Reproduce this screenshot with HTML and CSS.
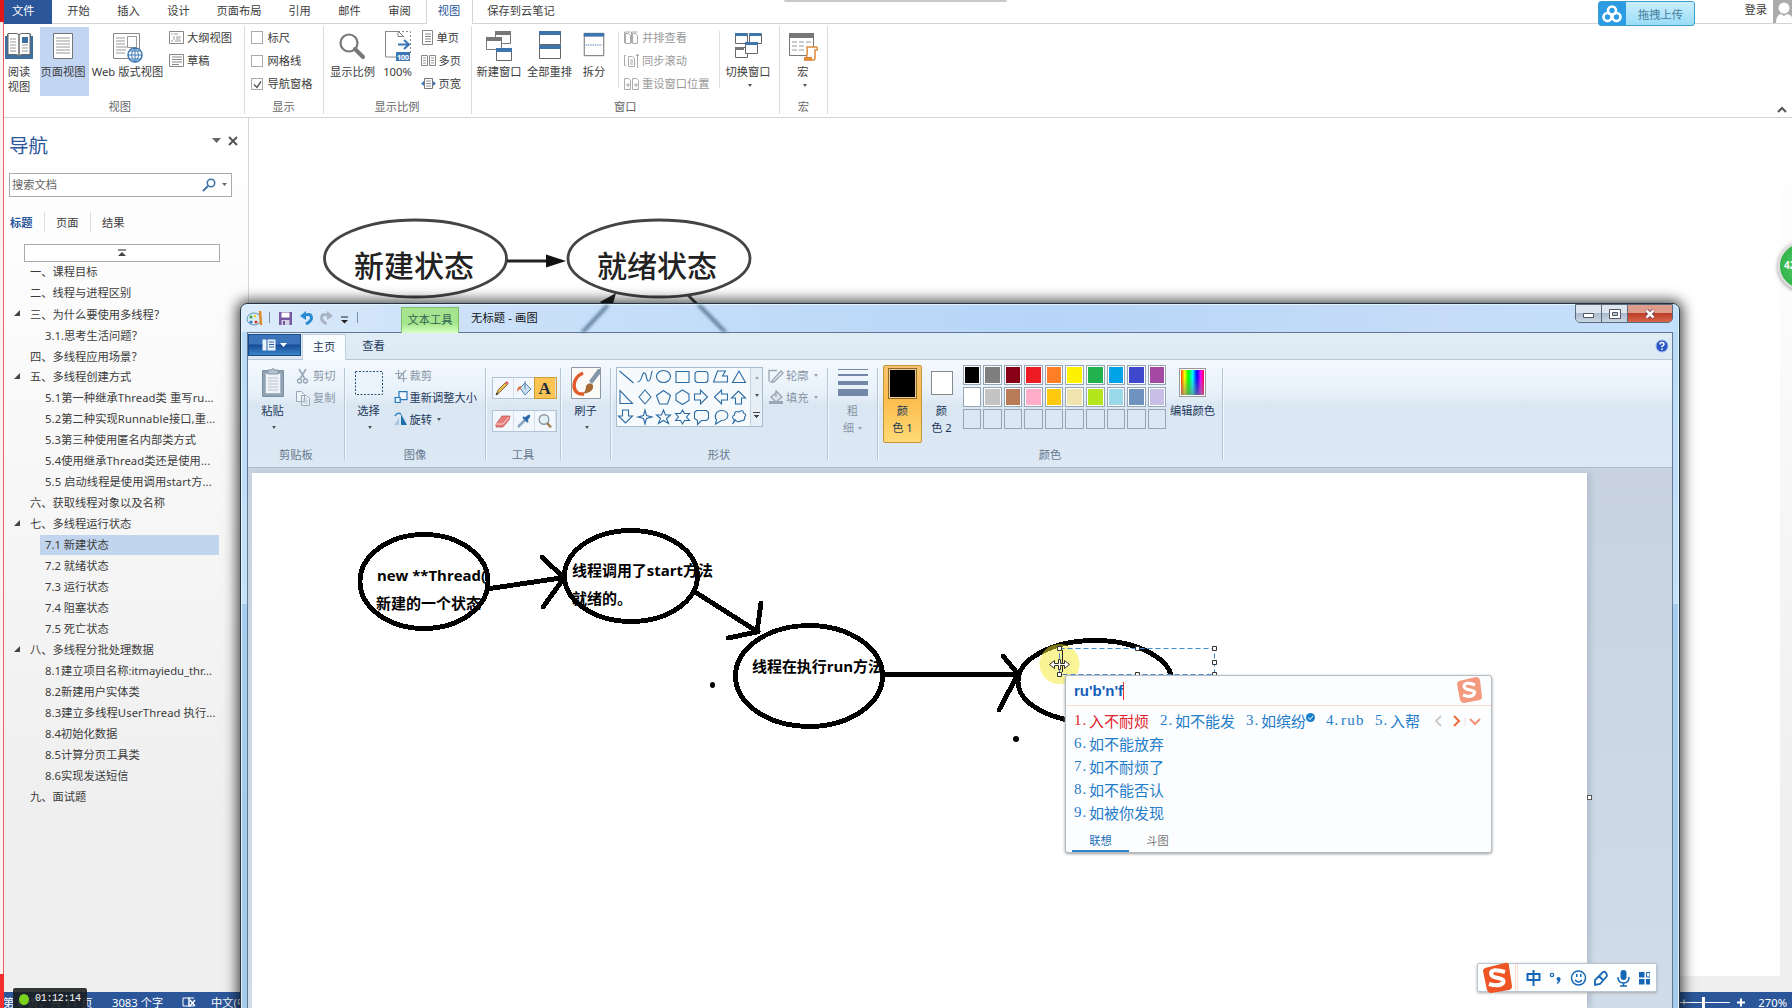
FILE: index.html
```html
<!DOCTYPE html>
<html lang="zh-CN">
<head>
<meta charset="utf-8">
<title>无标题 - 画图</title>
<link rel="stylesheet" href="styles.css">
</head>
<body>
<div class="screen">

<div class="word">
  <div class="word-tabs">
    <div class="file-tab">文件</div>
    <nav class="tab-list">
      <span class="wtab">开始</span><span class="wtab">插入</span><span class="wtab">设计</span><span class="wtab wide">页面布局</span><span class="wtab">引用</span><span class="wtab">邮件</span><span class="wtab">审阅</span><span class="wtab active">视图</span><span class="wtab note">保存到云笔记</span>
    </nav>
    <div class="account"><span>登录</span>
      <svg class="avatar" width="19" height="23" viewBox="0 0 19 23"><rect width="19" height="23" fill="#ababab"/><circle cx="11" cy="8" r="5.500" fill="#fff"/><path d="M3 23q0-8 5-9l3 2 3-2q5 1 5 4v5z" fill="#fff"/></svg>
    </div>
  </div>

  <div class="ribbon">
    <section class="group g-view">
      <div class="group-body">
        <div class="big read"><div class="ico"><svg width="30" height="28" viewBox="0 0 30 28"><path d="M1 4h2v-2h11l1 1 1-1h11v2h2v23H1z" fill="#3f6f9f"/><path d="M4 1.500h8q3 0 3 2v21q-1-2-3-2H4zM26 1.500h-8q-3 0-3 2v21q1-2 3-2h8z" fill="#fff" stroke="#666"/><path d="M6 7h6M6 10h6M6 13h6M6 16h6M6 19h6M18 16h6M18 19h6M18 13h6" stroke="#999"/><path d="M18 5h6v6h-6z" fill="#3f6f9f"/></svg></div><span>阅读</span><span>视图</span></div>
        <div class="big page on"><div class="ico"><svg width="22" height="28" viewBox="0 0 22 28"><path d="M1.500 1.500h19v25h-19z" fill="#fff" stroke="#777"/><path d="M4 6h14M4 9h14M4 12h14M4 15h14M4 18h14M4 21h14" stroke="#999"/></svg></div><span>页面视图</span></div>
        <div class="big web"><div class="ico"><svg width="32" height="32" viewBox="0 0 32 32"><path d="M1.500 1.500h26v25h-26z" fill="#fff" stroke="#888"/><path d="M4 6h9M4 9h9M4 12h9M4 15h11M4 18h10M4 21h9" stroke="#999"/><path d="M15.500 4.500h9v11h-9z" fill="#fff" stroke="#999"/><circle cx="23" cy="23" r="7" fill="#fff" stroke="#3b78b5" stroke-width="1.500"/><path d="M16 23h14M23 16v14M18 19h10M18 27h10M23 16q-7 7 0 14M23 16q7 7 0 14" fill="none" stroke="#3b78b5"/></svg></div><span>Web 版式视图</span></div>
        <div class="rows r1">
          <div class="row"><svg width="15" height="13" viewBox="0 0 15 13"><path d="M.5.500h14v12H.5z" fill="#fff" stroke="#888"/><path d="M2 3h2M5 3h4M4 6h2M7 6h5M4 8h2M7 8h4M2 10h2M6 10h6" stroke="#999"/></svg>大纲视图</div>
          <div class="row"><svg width="15" height="13" viewBox="0 0 15 13"><path d="M.5.500h14v12H.5z" fill="#fff" stroke="#888"/><path d="M3 3h10M3 5.500h10M3 8h10M3 10.500h7" stroke="#888"/></svg>草稿</div>
        </div>
      </div>
      <div class="group-label">视图</div>
    </section>
    <section class="group g-show">
      <div class="group-body"><div class="rows r2">
        <div class="row"><i class="check"></i>标尺</div>
        <div class="row"><i class="check"></i>网格线</div>
        <div class="row"><i class="check"><svg width="11" height="11" viewBox="0 0 11 11"><path d="M2 5.500l3 3 4-6" fill="none" stroke="#555" stroke-width="1.400"/></svg></i>导航窗格</div>
      </div></div>
      <div class="group-label">显示</div>
    </section>
    <section class="group g-zoom">
      <div class="group-body">
        <div class="big z1"><div class="ico"><svg width="28" height="30" viewBox="0 0 28 30"><circle cx="10" cy="11" r="8.500" fill="none" stroke="#777" stroke-width="2.200"/><path d="M16 17l8 8" stroke="#777" stroke-width="4" stroke-linecap="round"/></svg></div><span>显示比例</span></div>
        <div class="big z2"><div class="ico"><svg width="28" height="32" viewBox="0 0 28 32"><path d="M1.500 1v26H12M1 1.500h13v5h5" fill="none" stroke="#888"/><path d="M14 1.500h12.500V24" fill="none" stroke="#888" stroke-dasharray="2 2"/><path d="M14 1l6 6" stroke="#777"/><path d="M14 14.500h10M20 10l5 4.500-5 4.500" fill="none" stroke="#3b78b5" stroke-width="2"/><path d="M12 22h14v9H12z" fill="#3b78b5"/><text x="13" y="29.500" font-size="7.500" font-weight="700" fill="#fff" textLength="12">100</text></svg></div><span>100%</span></div>
        <div class="rows r3">
          <div class="row"><svg width="13" height="16" viewBox="0 0 13 16"><path d="M1.500.500h10v14h-10z" fill="#fff" stroke="#888"/><path d="M4 4h6M4 6.500h6M4 9h6M4 11.500h6" stroke="#888"/></svg>单页</div>
          <div class="row"><svg width="15" height="14" viewBox="0 0 15 14"><path d="M.5 1.500h6v10h-6zM8.500 1.500h6v10h-6z" fill="#fff" stroke="#888"/><path d="M2 4h3M2 6.500h3M2 9h3M10 4h3M10 6.500h3M10 9h3" stroke="#999"/></svg>多页</div>
          <div class="row"><svg width="15" height="14" viewBox="0 0 15 14"><path d="M3.500 1.500h8v10h-8z" fill="#fff" stroke="#777"/><path d="M5 4h5M5 6.500h5M5 9h5" stroke="#888"/><path d="M3 4v5L0 6.500zM12 4v5l3-2.500z" fill="#3b78b5"/></svg>页宽</div>
        </div>
      </div>
      <div class="group-label">显示比例</div>
    </section>
    <section class="group g-window">
      <div class="group-body">
        <div class="big n1"><div class="ico"><svg width="28" height="32" viewBox="0 0 28 32"><g fill="#fff" stroke="#777"><path d="M10.500 1.500h15v12h-15z"/><path d="M1.500 7.500h15v12h-15z"/><path d="M11.500 18.500h15v12h-15z" stroke="#666"/></g><path d="M10 1h16v4H10zM1 7h16v4H1z" fill="#777"/><path d="M11 18h16v4H11z" fill="#3f75ad"/></svg></div><span>新建窗口</span></div>
        <div class="big n2"><div class="ico"><svg width="24" height="32" viewBox="0 0 24 32"><path d="M1.500 1.500h21v13h-21zM1.500 15.500h21v13h-21z" fill="#fff" stroke="#666"/><path d="M1 1h22v4H1zM1 15h22v4H1z" fill="#3f75ad"/></svg></div><span>全部重排</span></div>
        <div class="big n3"><div class="ico"><svg width="24" height="26" viewBox="0 0 24 28"><path d="M1.500 1.500h21v24h-21z" fill="#fff" stroke="#666"/><path d="M1 1h22v4H1z" fill="#3f75ad"/><path d="M3 14h18" stroke="#3f75ad" stroke-dasharray="1.500 1"/></svg></div><span>拆分</span></div>
        <i class="vline"></i>
        <div class="rows r4">
          <div class="row"><svg width="15" height="14" viewBox="0 0 15 14"><path d="M1.500 2.500h3l2 2v8h-5zM8.500 2.500h3l2 2v8h-5zM.5 12V1h6M7.500 12V1h6" fill="none" stroke="#aaa"/></svg>并排查看</div>
          <div class="row"><svg width="15" height="14" viewBox="0 0 15 14"><path d="M2 1.500H.5v10H2M4.500 2.500h4l2 2v8h-6zM6 6h3M6 8h3M6 10h3M13.500 0v14M12 2l1.500-2L15 2" fill="none" stroke="#aaa"/></svg>同步滚动</div>
          <div class="row"><svg width="15" height="14" viewBox="0 0 15 14"><path d="M.5 1.500h4l2 2v9h-6zM8.500 1.500h4l2 2v9h-6zM2 8h4M10 8h4M4 6v4M12 6v4" fill="none" stroke="#aaa"/></svg>重设窗口位置</div>
        </div>
        <i class="vline"></i>
        <div class="big n4"><div class="ico"><svg width="28" height="28" viewBox="0 0 28 28"><g fill="#fff" stroke="#666"><path d="M1.500 1.500h12v10h-12zM15.500 1.500h12v10h-12zM1.500 15.500h12v10h-12z"/><path d="M11.500 10.500h12v11h-12z"/></g><path d="M1 1h12v3H1zM15 1h12v3H15zM11 10h13v3H11z" fill="#3f75ad"/><path d="M1 15h9v3H1z" fill="#777"/></svg></div><span>切换窗口</span><b class="arr"></b></div>
      </div>
      <div class="group-label">窗口</div>
    </section>
    <section class="group g-macro">
      <div class="group-body">
        <div class="big m1"><div class="ico"><svg width="30" height="30" viewBox="0 0 30 30"><path d="M1.500 1.500h24v22h-24z" fill="#fff" stroke="#777"/><path d="M1 1h25v5H1z" fill="#777"/><path d="M4 10h5M11 10h5M18 10h5M4 14h5M11 14h5M4 18h5M11 18h5" stroke="#999"/><path d="M19 15h9q2 0 1 3h-2v8q0 2-2 2h-8q3-3 2-13z" fill="#fff" stroke="#e08a3c" stroke-width="1.500"/><path d="M16 25h8v3.500h-8z" fill="#e08a3c"/></svg></div><span>宏</span><b class="arr"></b></div>
      </div>
      <div class="group-label">宏</div>
    </section>
    <svg class="collapse" width="10" height="7" viewBox="0 0 10 7"><path d="M1 6l4-4 4 4" fill="none" stroke="#555" stroke-width="2"/></svg>
  </div>

  <div class="word-main">
    <aside class="nav">
      <header><h1>导航</h1><svg width="28" height="12" viewBox="0 0 28 12"><path d="M1 3h9L5.500 8z" fill="#666"/><path d="M18 2l8 8M26 2l-8 8" stroke="#555" stroke-width="2"/></svg></header>
      <div class="search"><span>搜索文档</span><svg width="26" height="14" viewBox="0 0 26 14"><circle cx="9" cy="5" r="3.700" fill="none" stroke="#3f75ad" stroke-width="1.600"/><path d="M6 8l-5 5" stroke="#3f75ad" stroke-width="2"/><path d="M20 5h5l-2.500 3z" fill="#666"/></svg></div>
      <div class="nav-tabs"><b>标题</b><span>页面</span><span>结果</span></div>
      <div class="jump"><svg width="8" height="8" viewBox="0 0 8 8"><path d="M0 1h8" stroke="#444" stroke-width="1.200"/><path d="M0 7h8L4 3z" fill="#444"/></svg></div>
      <ul class="tree">
        <li>一、课程目标</li>
        <li>二、线程与进程区别</li>
        <li class="open">三、为什么要使用多线程<span class="q">？</span></li>
        <li class="sub">3.1.思考生活问题<span class="q">？</span></li>
        <li>四、多线程应用场景<span class="q">？</span></li>
        <li class="open">五、多线程创建方式</li>
        <li class="sub wide">5.1第一种继承Thread类 重写ru...</li>
        <li class="sub wide">5.2第二种实现Runnable接口,重...</li>
        <li class="sub">5.3第三种使用匿名内部类方式</li>
        <li class="sub wide">5.4使用继承Thread类还是使用...</li>
        <li class="sub wide">5.5 启动线程是使用调用start方...</li>
        <li>六、获取线程对象以及名称</li>
        <li class="open">七、多线程运行状态</li>
        <li class="sub sel">7.1 新建状态</li>
        <li class="sub">7.2 就绪状态</li>
        <li class="sub">7.3 运行状态</li>
        <li class="sub">7.4 阻塞状态</li>
        <li class="sub">7.5 死亡状态</li>
        <li class="open">八、多线程分批处理数据</li>
        <li class="sub">8.1建立项目名称:itmayiedu_thr...</li>
        <li class="sub">8.2新建用户实体类</li>
        <li class="sub wide">8.3建立多线程UserThread 执行...</li>
        <li class="sub">8.4初始化数据</li>
        <li class="sub">8.5计算分页工具类</li>
        <li class="sub">8.6实现发送短信</li>
        <li>九、面试题</li>
      </ul>
    </aside>
    <main class="doc">
      <div class="paper">
        <svg width="1531" height="230" viewBox="249 118 1531 230">
          <g fill="none" stroke="#444" stroke-width="2.800"><ellipse cx="415.500" cy="258.500" rx="91" ry="38.500"/><ellipse cx="659" cy="258.500" rx="91" ry="38.500"/></g>
          <path d="M507 261h42" stroke="#222" stroke-width="3"/><path d="M546 254.500l20 6.500-20 6.500z" fill="#111"/>
          <path d="M578 336l32-36M688 295l40 41" stroke="#444" stroke-width="3"/><path d="M616 293l-5 18-11-9z" fill="#222"/>
          <g class="state"><text x="354" y="277">新建状态</text><text x="597" y="277">就绪状态</text></g>
        </svg>
      </div>
    </main>
  </div>

  <footer class="status">
    <span class="s1">第 6 页，共 11 页</span><span class="s2">3083 个字</span>
    <svg class="s3" width="15" height="12" viewBox="0 0 15 12"><path d="M7 2H1v8h6zM7 2h5M7 10h5M7 1v10" fill="none" stroke="#fff"/><path d="M8 4l5 6M13 4l-5 6" stroke="#fff" stroke-width="1.400"/></svg>
    <span class="s4">中文(中国)</span>
    <svg class="slider" width="70" height="16" viewBox="0 0 70 16"><path d="M0 10.500h52M6 7.500v5" stroke="#fff"/><path d="M59 10.500h8M63 6.500v8" stroke="#fff" stroke-width="2"/><path d="M24 5h3v11h-3z" fill="#fff"/></svg>
    <span>270%</span>
  </footer>
</div>

<i class="rec-line"></i><i class="rec-top"></i><i class="rec-bottom"></i>
<div class="rec-time"><i></i><span>01:12:14</span></div>
<i class="top-pill"></i>
<div class="upload"><div class="cloud"><svg width="20" height="18" viewBox="0 0 20 18"><g fill="none" stroke="#fff" stroke-width="2.600"><circle cx="10" cy="5.500" r="4"/><circle cx="5.500" cy="12" r="4"/><circle cx="14.500" cy="12" r="4"/></g></svg></div><span>拖拽上传</span></div>
<div class="ball"><span>42</span></div>

<div class="paint">
  <div class="titlebar">
    <svg class="qat" width="118" height="22" viewBox="246 308 118 22">
      <ellipse cx="254" cy="319" rx="7" ry="6" fill="#d8ecf4" stroke="#5b94b8"/><circle cx="251" cy="317" r="1.500" fill="#3ba24b"/><circle cx="251" cy="322" r="1.500" fill="#3577c5"/><circle cx="256" cy="322" r="1.500" fill="#d33"/><circle cx="255" cy="316" r="1.300" fill="#ec3"/><path d="M260 311l1 14" stroke="#de8a2a" stroke-width="2.500"/>
      <path d="M269.500 312v11M357.500 312v11" stroke="#7890aa"/>
      <path d="M279 312h13v13h-13z" fill="#7659a4"/><path d="M281.500 312.500h8v5h-8z" fill="#fff"/><path d="M281.500 320h8v5h-8z" fill="#d5d2e7"/><path d="M283 321h2v4h-2z" fill="#7659a4"/>
      <path d="M303 316q8-4 8.500 2 0 3-5.500 6" fill="none" stroke="#268bd0" stroke-width="3"/><path d="M300 316l6-5v9z" fill="#268bd0"/>
      <path d="M330 316q-8-4-8.500 2 0 3 5 6" fill="none" stroke="#aab4c2" stroke-width="3"/><path d="M333 316l-6-5v9z" fill="#aab4c2"/>
      <path d="M341 317h7" stroke="#222"/><path d="M341 320h7l-3.500 3.500z" fill="#222"/>
    </svg>
    <div class="ctx-tab">文本工具</div>
    <div class="title">无标题 - 画图</div>
    <svg class="glass-lines" width="200" height="27" viewBox="560 305 200 27"><path d="M608 305l-28 30M694 300l34 35" stroke="#4d6e8d" stroke-width="4"/></svg>
    <div class="winbtns">
      <i><svg width="12" height="6" viewBox="0 0 12 6"><path d="M.5.500h10v4H.5z" fill="#fff" stroke="#556"/></svg></i>
      <i><svg width="12" height="10" viewBox="0 0 12 10"><path d="M.5.500h11v9H.5z" fill="#fff" stroke="#556"/><path d="M3.500 3.500h5v3h-5z" fill="#bcc8d6" stroke="#556"/></svg></i>
      <i class="close"><svg width="12" height="10" viewBox="0 0 12 10"><path d="M2.500 1.500l7 7M9.500 1.500l-7 7" stroke="#634" stroke-width="4"/><path d="M2.500 1.500l7 7M9.500 1.500l-7 7" stroke="#fff" stroke-width="2.500"/></svg></i>
    </div>
  </div>
  <div class="client">
    <div class="ptabs">
      <div class="pmenu"><svg width="26" height="12" viewBox="0 0 26 12"><path d="M.5.500h13v11H.5z" fill="#eaf3fc"/><path d="M5 0v12M7 3h5M7 5.500h5M7 8h5" stroke="#2a5ea8"/><path d="M18 4h7l-3.500 4z" fill="#fff"/></svg></div>
      <div class="ptab on">主页</div><div class="ptab">查看</div>
      <svg class="help" width="14" height="14" viewBox="0 0 14 14"><circle cx="7" cy="7" r="6" fill="#2a56c8" stroke="#9ab4e4"/><path d="M5 5.500q0-2 2-2t2 1.800Q9 6.500 7 7.200v1M7 9.500V11" fill="none" stroke="#fff" stroke-width="1.500"/></svg>
    </div>
    <div class="pribbon">
      <section class="pg p1"><div class="pbody">
        <div class="pbig paste"><div class="pico"><svg width="24" height="32" viewBox="0 0 24 32"><path d="M1.500 3.500h21v26h-21z" fill="#8fa3b5" stroke="#7c8fa1"/><path d="M4.500 6.500h15v20h-15z" fill="#eef3f8" stroke="#a9b8c6"/><path d="M7 11h10M7 14h10M7 17h10M7 20h10M7 23h10" stroke="#b5c2ce"/><path d="M7 3h3q2-3 4 0h3v4H7z" fill="#b4c2d0" stroke="#8496a6"/></svg></div><span>粘贴</span><b class="arr"></b></div>
        <div class="prows c1">
          <div class="prow dis"><svg width="15" height="16" viewBox="0 0 15 16"><path d="M3 1l6 10M10 1L4 11" stroke="#9aa9b9" stroke-width="1.600"/><circle cx="3.500" cy="13" r="2" fill="none" stroke="#9aa9b9" stroke-width="1.400"/><circle cx="9.500" cy="13" r="2" fill="none" stroke="#9aa9b9" stroke-width="1.400"/></svg>剪切</div>
          <div class="prow dis"><svg width="15" height="16" viewBox="0 0 15 16"><path d="M.5 1.500h5l3 3v7h-8zM5.500 5.500h5l3 3v7h-8z" fill="#eef3f8" stroke="#9aa9b9"/><path d="M7 9h4M7 11h5M7 13h5" stroke="#b4c0cc"/></svg>复制</div>
        </div>
      </div><div class="plabel">剪贴板</div></section>
      <section class="pg p2"><div class="pbody">
        <div class="pbig select"><div class="pico"><svg width="30" height="26" viewBox="0 0 30 26"><path d="M1.500 1.500h27v23h-27z" fill="#e9f3fb" stroke="#2f4e79" stroke-dasharray="2 1.500"/></svg></div><span>选择</span><b class="arr"></b></div>
        <div class="prows c2">
          <div class="prow dis"><svg width="12" height="12" viewBox="0 0 12 12"><path d="M3.500 0v8.500H12M0 3.500h8.500V12M3 9l8-9" fill="none" stroke="#94a4b5" stroke-width="1.200"/></svg>裁剪</div>
          <div class="prow"><svg width="13" height="13" viewBox="0 0 13 13"><path d="M4.500.700h8v8h-8z" fill="#f3faff" stroke="#2877bb" stroke-width="1.200"/><path d="M.700 6.500h5v5h-5z" fill="#e4f1fb" stroke="#2877bb" stroke-width="1.200"/></svg>重新调整大小</div>
          <div class="prow"><svg width="14" height="14" viewBox="0 0 14 14"><path d="M7 2l6 11H7z" fill="#1e6fae"/><path d="M5 6v7H0z" fill="#a9c9e2"/><path d="M1 4q2-4 6-2" fill="none" stroke="#3b86c3" stroke-width="1.500"/></svg>旋转<b class="arr side"></b></div>
        </div>
      </div><div class="plabel">图像</div></section>
      <section class="pg p3"><div class="pbody">
        <div class="tools">
          <div class="toolbox">
            <i><svg width="16" height="16" viewBox="0 0 16 16"><path d="M1 15l2-5 8-8 2 2-8 8z" fill="#eebc4e" stroke="#6b5526" stroke-width=".8"/><path d="M11 2l2 2" stroke="#d66" stroke-width="2.500"/><path d="M1 15l2.500-1-1.500-1.500z" fill="#222"/></svg></i>
            <i><svg width="16" height="16" viewBox="0 0 16 16"><path d="M4 8l5-5 6 6-6 6z" fill="#c6dff1" stroke="#5a84aa"/><path d="M9 9V1" stroke="#5a84aa"/><path d="M5 6Q1 6 1 12q2-3 4-3z" fill="#e0713a"/></svg></i>
            <i class="on"><svg width="16" height="16" viewBox="0 0 16 16"><text x="1.500" y="14" class="serif-a">A</text></svg></i>
          </div>
          <div class="toolbox">
            <i><svg width="16" height="16" viewBox="0 0 16 16"><path d="M1 11l6-8h8l-1 4-6 7H1z" fill="#e77d79" stroke="#b94f4d" stroke-width=".7"/><path d="M1 11h7l6-7" fill="none" stroke="#ffd3cf"/></svg></i>
            <i><svg width="16" height="16" viewBox="0 0 16 16"><path d="M2 14l7-7" stroke="#8ba4bd" stroke-width="2.500"/><path d="M8 5l3 3 3-4q1-3-2-2z" fill="#2a68ab"/><path d="M7 4l5 5" stroke="#2a68ab" stroke-width="2"/></svg></i>
            <i><svg width="16" height="16" viewBox="0 0 16 16"><circle cx="7" cy="6.500" r="4.800" fill="#e5f1f8" stroke="#8a99a8" stroke-width="1.400"/><path d="M10 10l4 4.500" stroke="#a58155" stroke-width="2.500"/></svg></i>
          </div>
        </div>
      </div><div class="plabel">工具</div></section>
      <section class="pg p4"><div class="pbody">
        <div class="pbig brush"><div class="pico"><svg width="30" height="32" viewBox="0 0 30 32"><path d="M.5.500h29v31H.5z" fill="#fbfaf6" stroke="#8b98a5"/><path d="M12 6q-9 4-9 13 1 9 10 8" fill="none" stroke="#e05a2a" stroke-width="3.500"/><path d="M27 2L18 14l3 3 8-10V2z" fill="#8296a8"/><path d="M11 27q4-2 4-8 3-5 7-1 1 6-6 8z" fill="#a86a35"/></svg></div><span>刷子</span><b class="arr"></b></div>
      </div><div class="plabel"></div></section>
      <section class="pg p5"><div class="pbody">
        <div class="shapes">
          <svg width="133" height="59" viewBox="617.500 368 133 59"><g fill="none" stroke="#2b6ba3" stroke-width="1.100">
            <path d="M620 371l14 12"/><path d="M638 382c5 0 4-10 7-9s1 8 4 8 2-9 4-10"/><ellipse cx="664" cy="376.500" rx="7" ry="6"/><path d="M676.500 371.500h13v11h-13z"/><rect x="695.500" y="371.500" width="13" height="11" rx="3"/><path d="M714 382l4-11h8l-3 5h5v6z"/><path d="M739.500 371l6.500 11.500h-13z"/>
            <path d="M620.500 390.500v13h12.500z"/><path d="M645.500 390l6 7-6 7-6-7z"/><path d="M664 390.500l7 5-3 8.500h-8l-3-8.500z"/><path d="M683 390l6.500 4v6.500l-6.500 4-6.500-4V394z"/><path d="M695 394h6v-4l7 7-7 7v-4h-6z"/><path d="M728 394h-6v-4l-7 7 7 7v-4h6z"/><path d="M736 404v-6h-4l7-7 7 7h-4v6z"/>
            <path d="M623 410v6h-4l7 7 7-7h-4v-6z"/><path d="M645.500 410l1.500 5.500 5.500 1.500-5.500 1.500-1.500 5.500-1.500-5.500-5.500-1.500 5.500-1.500z"/><path d="M664 410l2 5h5l-4 3.500 2 5-5-3-5 3 2-5-4-3.500h5z"/><path d="M683 410l2 3.500h5l-3 3.500 3 3.500h-5l-2 3.500-2-3.500h-5l3-3.500-3-3.500h5z"/><path d="M697 410.500h10l2 2v6l-2 2h-5l-4 4v-4l-3-2v-6z"/><path d="M717 420c-3-4 0-9.500 5-9.500 9 0 8 10 0 10l-6 3.500z"/><path d="M735 420q-4-3 0-5 0-5 4-3 5-3 5 1 4 2 1 4 1 4-4 4-3 2-5-1l-3 4z"/>
          </g></svg>
          <div class="shape-scroll"><b class="up"></b><b class="arr"></b><b class="arr bar"></b></div>
        </div>
        <div class="prows c3">
          <div class="prow dis"><svg width="16" height="14" viewBox="0 0 16 14"><path d="M1 12.500V1.500h8M4 12l9-10 2 2-9 9H3z" fill="none" stroke="#9aa6b5" stroke-width="1.300"/></svg>轮廓<b class="arr side"></b></div>
          <div class="prow dis"><svg width="16" height="15" viewBox="0 0 16 15"><path d="M1 11h14v3H1z" fill="#9aa6b5"/><path d="M3 7l6-5 5 5-6 5zM8 7V0" fill="#dde5ee" stroke="#9aa6b5" stroke-width="1.300"/></svg>填充<b class="arr side"></b></div>
        </div>
      </div><div class="plabel">形状</div></section>
      <section class="pg p6"><div class="pbody">
        <div class="pbig dis"><div class="pico"><svg width="30" height="30" viewBox="0 0 30 30"><g fill="#7387a8"><path d="M0 1h30v1H0zM0 6h30v2H0zM0 13h30v4H0zM0 21h30v7H0z"/></g></svg></div><span>粗</span><span class="second">细<b class="arr side"></b></span></div>
      </div><div class="plabel"></div></section>
      <section class="pg p7"><div class="pbody">
        <div class="pbig color1"><div class="pico"><i class="sw black"></i></div><span>颜</span><span class="second">色 1</span></div>
        <div class="pbig color2"><div class="pico"><i class="sw white"></i></div><span>颜</span><span class="second">色 2</span></div>
        <div class="palette">
          <i style="background:#000"></i><i style="background:#7f7f7f"></i><i style="background:#880015"></i><i style="background:#ed1c24"></i><i style="background:#ff7f27"></i><i style="background:#fff200"></i><i style="background:#22b14c"></i><i style="background:#00a2e8"></i><i style="background:#3f48cc"></i><i style="background:#a349a4"></i>
          <i style="background:#fff"></i><i style="background:#c3c3c3"></i><i style="background:#b97a57"></i><i style="background:#ffaec9"></i><i style="background:#ffc90e"></i><i style="background:#efe4b0"></i><i style="background:#b5e61d"></i><i style="background:#99d9ea"></i><i style="background:#7092be"></i><i style="background:#c8bfe7"></i>
          <i class="none"></i><i class="none"></i><i class="none"></i><i class="none"></i><i class="none"></i><i class="none"></i><i class="none"></i><i class="none"></i><i class="none"></i><i class="none"></i>
        </div>
        <div class="pbig edit"><div class="pico"><i class="rainbow"></i></div><span>编辑颜色</span></div>
      </div><div class="plabel">颜色</div></section>
    </div>
    <div class="workspace">
      <svg class="canvas" width="1335" height="535" viewBox="252 473 1335 535">
        <g fill="none" stroke="#000" stroke-width="4.900" stroke-linecap="round" shape-rendering="crispEdges">
          <ellipse cx="424" cy="581.500" rx="64" ry="47"/><ellipse cx="631" cy="576" rx="66.500" ry="45.500"/><ellipse cx="809" cy="676" rx="73.500" ry="50.500"/><ellipse cx="1095" cy="681.500" rx="77" ry="41"/>
          <path d="M490 588.500l74-11M542 557l22 21M543 607l21-29"/><path d="M695 592l63 40M761 603l-4 29-29 6"/><path d="M884 674.500h135M1003 656l15 18-19 36"/>
        </g>
        <ellipse cx="712.500" cy="685" rx="2.500" ry="3"/><ellipse cx="1016" cy="739" rx="3" ry="3"/>
        <g class="note-text"><text x="377" y="580.500" textLength="109" lengthAdjust="spacingAndGlyphs">new **Thread(</text><text x="376" y="608.500">新建的一个状态</text><text x="572" y="575.500" textLength="141" lengthAdjust="spacingAndGlyphs">线程调用了start方法</text><text x="572" y="603.500">就绪的。</text><text x="752" y="671.500" textLength="131" lengthAdjust="spacingAndGlyphs">线程在执行run方法</text></g>
        <circle cx="1059.500" cy="664" r="20" fill="#f4e92c" opacity=".5"/>
        <path d="M1059.500 648.500h155v26h-155z" fill="none" stroke="#3c8ad8" stroke-dasharray="5 3"/>
        <g fill="#fff" stroke="#333"><path d="M1057.500 646.500h4v4h-4zM1135.500 646.500h4v4h-4zM1212.500 646.500h4v4h-4zM1212.500 660.500h4v4h-4zM1057.500 672.500h4v4h-4zM1135.500 672.500h4v4h-4zM1212.500 672.500h4v4h-4z"/></g>
        <path d="M1062.500 650v22" stroke="#222"/>
        <path d="M1049.500 664.500l5-4v3h4v-4h2v4h4v-3l5 4-5 4v-3h-4v4h-2v-4h-4v3z" fill="#fff" stroke="#333"/>
      </svg>
      <i class="handle"></i>
    </div>
  </div>
</div>

<div class="ime">
  <div class="ime-head"><span>ru'b'n'f</span><svg width="28" height="28" viewBox="0 0 28 28"><path d="M4 5l17-4q3 0 4 3l2 17q0 2-2 3L9 27q-3 0-4-3L2 8q0-2 2-3z" fill="#f39a7e"/><path d="M20 9q-10-4-11 1 0 3 6 4t4 4q-3 4-11 1" fill="none" stroke="#fff" stroke-width="3.200"/></svg></div>
  <div class="cands">
    <div class="crow"><span class="first k1"><em>1.</em>入不耐烦</span><span class="k2"><em>2.</em>如不能发</span><span class="k3"><em>3.</em>如缤纷<svg width="9" height="9" viewBox="0 0 9 9"><circle cx="4.500" cy="4.500" r="4.500" fill="#1b7fcb"/><path d="M2.500 4.500l1.500 2 3-3.500" fill="none" stroke="#fff"/></svg></span><span class="k4"><em>4.</em><u>rub</u></span><span class="k5"><em>5.</em>入帮</span>
      <svg class="pager" width="48" height="14" viewBox="0 0 48 14"><g fill="none" stroke-width="2"><path d="M6 2L1 7l5 5" stroke="#ccc"/><path d="M19 2l5 5-5 5" stroke="#ec6a3c"/><path d="M35 5l5 5 5-5" stroke="#f0937a"/><path d="M30 4v8" stroke="#eadfdc" stroke-width="1"/></g></svg></div>
    <div class="crow"><span><em>6.</em>如不能放弃</span></div>
    <div class="crow"><span><em>7.</em>如不耐烦了</span></div>
    <div class="crow"><span><em>8.</em>如不能否认</span></div>
    <div class="crow"><span><em>9.</em>如被你发现</span></div>
  </div>
  <div class="ime-tabs"><span class="on">联想</span><span>斗图</span></div>
</div>

<div class="sogou">
  <svg class="slogo" width="32" height="32" viewBox="0 0 32 32"><path d="M4 6l20-5q4-1 4 3l3 20q0 3-3 4L10 31q-3 0-4-3L2 9q0-2 2-3z" fill="#ee5424"/><path d="M24 10q-13-4-14 1 0 4 7 5t5 5q-4 4-14 1" fill="none" stroke="#fff" stroke-width="4"/></svg>
  <i class="sline"></i>
  <svg width="124" height="18" viewBox="1526 969 124 18"><g fill="none" stroke="#1667b5" stroke-width="2"><path d="M1527.500 974h12v6h-12zM1533.500 970v16"/><circle cx="1552" cy="975" r="1.700" stroke-width="1.300"/><circle cx="1578.500" cy="978" r="7" stroke-width="1.500"/><path d="M1575 980q3.500 4 7 0" stroke-width="1.400"/><path d="M1595 985v-5l8-8q2-1 3 1t1 3l-7 8zM1599 976l4 4" stroke-width="1.800"/><path d="M1618 977q0 6 5.500 6t5.500-6M1623.500 983v3M1620 986h7" stroke-width="1.500"/></g><g fill="#1667b5"><circle cx="1558.500" cy="979" r="2"/><path d="M1560.500 979q0 3-3 5l-1-1q2-1 2-3zM1576 974h1.500v3h-1.500zM1580 974h1.500v3h-1.500z"/><rect x="1620.500" y="970" width="6" height="10" rx="3"/><path d="M1639 972h5.500v5.500h-5.500zM1639 979h5.500v5.500h-5.500zM1646 979h5.500v5.500h-5.500z"/></g><path d="M1646.500 972.500h3.500v4.500h-3.500z" fill="none" stroke="#1667b5"/></svg>
</div>

</div>
</body>
</html>
```
FILE: styles.css
```css
* { box-sizing: border-box; }
body { margin: 0; background: #fff; }
.screen {
  position: relative; width: 1792px; height: 1008px; overflow: hidden;
  font: 11.25px/15px "Noto Sans", "Noto Sans CJK SC", sans-serif; color: #3c3c3c;
}
svg { display: block; flex: none; }
i, em { font-style: normal; }

/* word processor */
.word { display: flex; flex-direction: column; height: 1008px; }
.word-tabs { display: flex; height: 24px; border-bottom: 1px solid #d4d4d4; flex: none; }
.file-tab { width: 52px; height: 24px; padding: 3px 0 0 12px; background: #2b579a; color: #fff; }
.tab-list { display: flex; }
.wtab { width: 50px; height: 24px; padding-top: 3px; text-align: center; white-space: nowrap; }
.wtab.wide { width: 71px; }
.wtab:first-child { margin-left: 1.5px; }
.wtab.active { width: 47px; margin-left: 1px; background: #fff; border: 1px solid #d4d4d4; border-width: 0 1px; color: #2b579a; }
.wtab.note { width: 97px; }
.account { display: flex; margin-left: auto; gap: 6px; }
.account span { padding-top: 2px; }

.ribbon { display: flex; height: 94px; padding-left: 4px; border-bottom: 1px solid #d4d4d4; flex: none; }
.group { display: flex; flex-direction: column; height: 88px; margin-top: 2px; border-right: 1px solid #dcdcdc; flex: none; }
.group-body { display: flex; height: 75px; }
.group-label { text-align: center; line-height: 14px; color: #666; }
.g-view { width: 240.5px; } .g-show { width: 79px; } .g-zoom { width: 148px; } .g-window { width: 308.5px; } .g-macro { width: 48px; }
.g-view .group-label { padding-right: 8px; }
.big { display: flex; flex-direction: column; align-items: center; height: 69px; margin-top: 1px; white-space: nowrap; flex: none; }
.big.on { background: #c2d5f2; }
.ico { height: 37px; padding-top: 5px; flex: none; }
.big span { height: 15px; }
.read { width: 30px; } .page { width: 49px; margin-left: 5.5px; } .web { width: 76px; margin-left: 1px; }
.page .ico, .page span { margin-left: -2px; }
.z1 { width: 46px; margin-left: 6px; } .z2 { width: 34px; margin-left: 5px; }
.n1 { width: 46px; margin-left: 4.5px; } .n2 { width: 46px; margin-left: 4.5px; } .n3 { width: 26px; margin-left: 8.5px; }
.n4 { width: 46px; margin-left: 5px; } .m1 { width: 46px; }
.n1 .ico, .n2 .ico, .z2 .ico { padding-top: 3px; }
.big .arr { margin: 5px 0 0 3px; }
.vline { width: 1px; height: 57px; margin-top: 5px; background: #e0e0e0; }
.n3 + .vline { margin-left: 10.5px; }
.rows { padding-top: 0; }
.r1 { margin-left: 3.5px; } .r2 { margin-left: 6px; } .r3 { margin-left: 6px; } .r4 { width: 95px; margin-left: 5.5px; color: #999; }
.row { display: flex; align-items: center; height: 23.2px; gap: 3px; white-space: nowrap; }
.r2 .row { gap: 4.5px; }
.check { width: 12.5px; height: 12.5px; border: 1px solid #ababab; }
.arr { width: 0; height: 0; border: 2.5px solid transparent; border-top: 3px solid #555; border-bottom: 0; }
.collapse { margin: 82px 5px 0 auto; }

.word-main { display: flex; flex: 1; background: linear-gradient(#fff 0, #fdfdfd 120px, #efefef 80%); }
.nav { width: 245px; margin-left: 4px; border-right: 1px solid #d8d8d8; }
.nav header { display: flex; justify-content: space-between; height: 55px; padding: 16px 9.5px 0 5px; }
.nav h1 { margin: 0; font-weight: 400; font-size: 19.5px; line-height: 24px; color: #2b579a; }
.nav header svg { margin-top: 1px; }
.search { display: flex; justify-content: space-between; align-items: center; width: 223px; height: 24px; margin-left: 5px; padding: 0 3px 1px 2px; border: 1px solid #ababab; background: #fff; color: #666; }
.nav-tabs { display: flex; height: 20px; margin: 15px 0 12px 6px; line-height: 21px; }
.nav-tabs b { width: 34px; color: #2b579a; }
.nav-tabs span { width: 46px; padding-left: 11px; border-left: 1px solid #ddd; }
.jump { display: flex; justify-content: center; align-items: center; width: 196px; height: 18px; margin-left: 20px; border: 1px solid #ababab; background: #fff; }
.tree { margin: 0; padding: 0; list-style: none; line-height: 20px; }
.tree li { height: 20px; margin: 0 30px 1px 10px; padding-left: 16px; white-space: nowrap; }
.tree li.open::before { content: ""; float: left; width: 0; height: 0; margin: 6px 10px 0 -16px; border-left: 6px solid transparent; border-bottom: 6px solid #444; }
.tree li.sub { margin-left: 36px; padding-left: 5px; }
.tree li.wide { letter-spacing: .09px; }
.tree li.sel { margin-right: 29px; background: #c2d5ee; }
.q { font-family: "Noto Sans CJK JP", sans-serif; }
.doc { flex: 1; }
.paper { width: 1531px; height: 858px; background: #fff; }
.state text { font-size: 30px; font-weight: 500; fill: #222; }

.status { display: flex; align-items: center; height: 16px; padding: 4px 5px 0 3px; background: #2b579a; color: #fff; white-space: nowrap; overflow: hidden; flex: none; }
.s1 { width: 109px; letter-spacing: .2px; } .s2 { width: 70px; } .s3 { margin-right: 14px; }
.slider { margin: -4px 10px 0 auto; }

/* screen recorder and desktop widgets */
.rec-line, .rec-top, .rec-bottom, .rec-time, .top-pill, .upload, .ball { position: absolute; }
.rec-line { left: 0; top: 0; width: 4px; height: 1008px; border-right: 1px solid #e86060; background: #fdf1f1; }
.rec-top { left: 0; top: 0; width: 4px; height: 22px; background: #e01818; }
.rec-bottom { left: 0; top: 974px; width: 4px; height: 34px; background: #f32c2c; }
.rec-time { display: flex; align-items: center; left: 13px; top: 988px; width: 74px; height: 20px; padding: 2px 0 0 6px; gap: 6px; border-radius: 2px 2px 0 0; background: rgba(25,28,30,.88); color: #fff; font: 10px/20px "Liberation Mono", monospace; letter-spacing: -.3px; }
.rec-time i { width: 10px; height: 11px; border-radius: 50%; background: #7ad21c; }
.top-pill { left: 784px; top: 0; width: 223px; height: 2px; background: #c9c9c9; border-radius: 0 0 3px 3px; }
.upload { display: flex; left: 1598px; top: 1px; width: 97px; height: 25px; border: 1px solid #3c9ccc; border-radius: 3px; background: linear-gradient(#c9effc, #9bdcf8); color: #447d9c; }
.cloud { width: 27px; padding: 3px; background: #2b9be4; }
.upload span { padding: 5px 0 0 12px; }
.ball { left: 1778px; top: 242px; width: 48px; height: 48px; padding: 14px 0 0 4px; border: 2px solid #ddd; border-radius: 50%; background: radial-gradient(#5ad06c, #22a83c); box-shadow: 0 1px 4px #888; color: #fff; font-weight: 700; font-size: 10px; }

/* paint window */
.paint { position: absolute; left: 240px; top: 303px; width: 1440px; height: 720px; padding: 1px 6px 0 6px; border: 1px solid #26323e; border-radius: 7px 7px 0 0; background: linear-gradient(#b9daf8 0, #c6e1f8 300px, #a8cdee 300px, #a3caea); box-shadow: inset 0 0 0 1px #e2f3fd, 0 0 13px 3px rgba(0,0,0,.7); }
.titlebar { display: flex; position: relative; height: 27px; margin: 0 -4px 0 -5px; padding-left: 4px; background: linear-gradient(90deg, #dcecfb 0, #cfe3f9 160px, #b6d5f8 800px, #c6dcf8 1200px, #c3e0fb); border-radius: 5px 5px 0 0; }
.qat { margin-top: 3px; }
.ctx-tab { width: 58px; height: 26px; margin: 2px 12px 0 37px; padding-top: 4px; text-align: center; background: linear-gradient(#a8e292, #a4e58a 60%, #d9ffc5); border: 1px solid #7cbd67; border-bottom: 0; color: #2f6353; white-space: nowrap; }
.title { padding-top: 5px; color: #111; white-space: nowrap; letter-spacing: .15px; }
.glass-lines { position: absolute; left: 318px; top: 0; opacity: .8; filter: blur(1.5px); }
.winbtns { display: flex; width: 98px; height: 19px; margin: -1px 4px 0 auto; border: 1px solid #5a6a7b; border-radius: 0 0 5px 5px; overflow: hidden; }
.winbtns i { display: flex; align-items: center; justify-content: center; width: 26.5px; background: linear-gradient(#dde6ef 45%, #acbccd 50%, #c9d7e6); border-right: 1px solid #5a6a7b; }
.winbtns i:first-child { padding-top: 5px; }
.winbtns .close { width: 44px; border: 0; background: linear-gradient(#dd9c8c 45%, #bd3d28 50%, #d7664a); }
.client { height: 690px; border: 1px solid #607890; border-bottom: 0; background: #cdd8e6; }
.ptabs { display: flex; height: 27px; padding-top: 1px; background: linear-gradient(#e0ecf6, #dce8f2); border-bottom: 1px solid #b6c8da; color: #1e395b; }
.pmenu { display: flex; align-items: center; justify-content: center; width: 53px; height: 22px; background: linear-gradient(#3c74bb 45%, #164a94 50%, #3a86cc); border: 1px solid #1b4a87; }
.ptab { width: 55px; height: 26px; padding-top: 4px; text-align: center; }
.ptab.on { width: 44px; margin-left: 1px; background: #f9fcff; border: 1px solid #c0d0e0; border-bottom: 0; }
.help { margin: 5px 3px 0 auto; }
.pribbon { display: flex; height: 108px; background: linear-gradient(#f4f9fe 0, #e6f0f9 35px, #dae6f2 45px, #dce8f4); border-bottom: 1px solid #a9bccd; color: #1e395b; }
.pg { height: 92px; margin-top: 8px; border-right: 1px solid #b4c6d8; box-shadow: 1px 0 #f3f8fd; flex: none; }
.pbody { display: flex; height: 82px; margin-top: -3px; }
.plabel { height: 13px; line-height: 15px; text-align: center; color: #66798f; }
.p1 { width: 97px; } .p2 { width: 141px; } .p3 { width: 75px; } .p4 { width: 50px; } .p5 { width: 217px; } .p6 { width: 50px; } .p7 { width: 345px; }
.pbig { display: flex; flex-direction: column; align-items: center; white-space: nowrap; flex: none; }
.pico { display: flex; align-items: center; height: 38px; padding-bottom: 3px; flex: none; }
.pbig span { height: 15px; }
.pbig .second { height: 17px; padding-top: 2px; }
.pbig > .arr { margin: 8px 0 0 2px; }
.arr.side { display: inline-block; margin-left: 4px; vertical-align: middle; }
.dis { color: #8895a5; } .dis .arr { border-top-color: #9aa5b2; }
.paste { width: 30px; margin-left: 9.5px; } .select { width: 30px; margin-left: 8.5px; } .brush, .p6 .pbig { width: 49px; }
.prow { display: flex; align-items: center; height: 21.7px; white-space: nowrap; }
.prow svg { margin-right: 2px; }
.prow .side { margin-left: 5px; }
.c1 { margin-left: 8.5px; } .c2 { margin-left: 10px; } .c3 { margin-left: 5px; }
.c2 svg { width: 14px; }
.tools { display: flex; flex-direction: column; gap: 11px; margin: 12px 0 0 5.5px; }
.toolbox { display: flex; width: 65px; height: 22px; border: 1px solid #b3c4d6; background: #f1f7fc; }
.toolbox i { display: flex; align-items: center; justify-content: center; width: 21px; border-right: 1px solid #d5e0eb; }
.toolbox i.on { background: #fbc453; outline: 1px solid #cf9d38; }
.serif-a { font: bold 17px "Liberation Serif", serif; fill: #1b2b40; }
.shapes { display: flex; width: 147px; height: 60px; margin: 2px 0 0 5px; border: 1px solid #a8bccf; background: #f6fafd; }
.shape-scroll { display: flex; flex-direction: column; align-items: center; justify-content: space-around; width: 13px; background: #e6eef6; border-left: 1px solid #c5d3e0; }
.up { border: 2.5px solid transparent; border-bottom: 3px solid #9aa8b8; border-top: 0; }
.arr.bar { width: 7px; height: 6px; border: 0; border-top: 1px solid #444; background: linear-gradient(#444, #444) no-repeat 50% 2px / 5px 1px, linear-gradient(#444, #444) no-repeat 50% 3px / 3px 1px, linear-gradient(#444, #444) no-repeat 50% 4px / 1px 1px; }
.color1 { width: 39px; height: 78px; margin: 0 0 0 5px; border: 1px solid #c29536; border-radius: 2px; background: linear-gradient(#f5c372, #fbbd4e 45%, #ffda76); }
.color1 .pico { height: 37px; }
.color2 { width: 30px; margin-left: 4.5px; }
.sw.black { width: 29px; height: 31px; background: #000; border: 1px solid #8c6b2c; outline: 1px solid #ecc98c; outline-offset: -2px; }
.sw.white { width: 22px; height: 24px; background: #fff; border: 1px solid #888; }
.palette { display: grid; grid-template-columns: repeat(10, 18.6px); grid-auto-rows: 19.5px; gap: 2.5px 2px; height: 65px; margin-left: 6px; }
.palette i { border: 1px solid #98a5b2; box-shadow: inset 0 0 0 1px #fff; }
.palette i.none { box-shadow: none; }
.edit { width: 48px; margin-left: 2px; }
.rainbow { width: 27px; height: 29px; border: 1px solid #999; outline: 1px solid #fff; outline-offset: -2px; background: linear-gradient(transparent 30%, #808080b0), linear-gradient(90deg, red, #ff0 18%, #0f0 34%, #0ff 50%, #00f 68%, #f0f 84%, red); }
.workspace { display: flex; align-items: flex-start; padding: 5px 0 0 4px; background: linear-gradient(#c8d2e1, #d0dce9); }
.canvas { background: #fff; box-shadow: 4px 0 5px #b5c1d1; }
.handle { width: 5px; height: 5px; margin-top: 322px; border: 1px solid #555; background: #fff; position: relative; }
.note-text { font: bold 15px "Open Sans", "Noto Sans CJK SC", sans-serif; fill: #000; }

/* input method */
.ime { position: absolute; left: 1065px; top: 675px; width: 427px; height: 178px; border: 1px solid #b5bcc4; border-radius: 3px; background: #fcfdfe; box-shadow: 0 1px 3px #999; color: #1f7cc8; }
.ime-head { display: flex; justify-content: space-between; height: 30px; padding: 0 8px 0 8px; border-bottom: 1px solid #fbd9c9; }
.ime-head span { height: 18px; margin-top: 6px; border-right: 1px solid #e33; font: bold 15px/18px "Liberation Sans", sans-serif; color: #1360b8; }
.cands { height: 121px; padding: 3.5px 0 0 8px; font: 400 15px/23px "Noto Sans CJK SC", sans-serif; }
.crow { display: flex; height: 22.9px; align-items: center; white-space: nowrap; }
.crow span { display: flex; }
.crow em { width: 15px; font: 15px/23px "Liberation Serif", serif; letter-spacing: 1px; }
.crow u { text-decoration: none; font: 15px/23px "Liberation Serif", serif; letter-spacing: 1.3px; }
.k1, .k2 { width: 86px; } .k3 { width: 80px; } .k4 { width: 49px; } .k5 { width: 60px; }
.k3 svg { margin-top: 4px; }
.crow .first { color: #e0222c; }
.ime-tabs { display: flex; margin-left: 6px; color: #777; }
.ime-tabs span { width: 57px; height: 25px; padding-top: 6px; text-align: center; }
.ime-tabs .on { color: #1a6fb5; border-bottom: 2px solid #3187c9; }
.sogou { display: flex; align-items: center; position: absolute; left: 1477px; top: 963px; width: 180px; height: 29px; padding-left: 3px; border: 1px solid #b9c6d2; border-radius: 2px; background: #fdfefe; box-shadow: 0 1px 3px #aaa; }
.sline { width: 3px; height: 27px; margin: 0 8px 0 2px; border: 1px solid #fbdccd; border-width: 0 1px; }
```
